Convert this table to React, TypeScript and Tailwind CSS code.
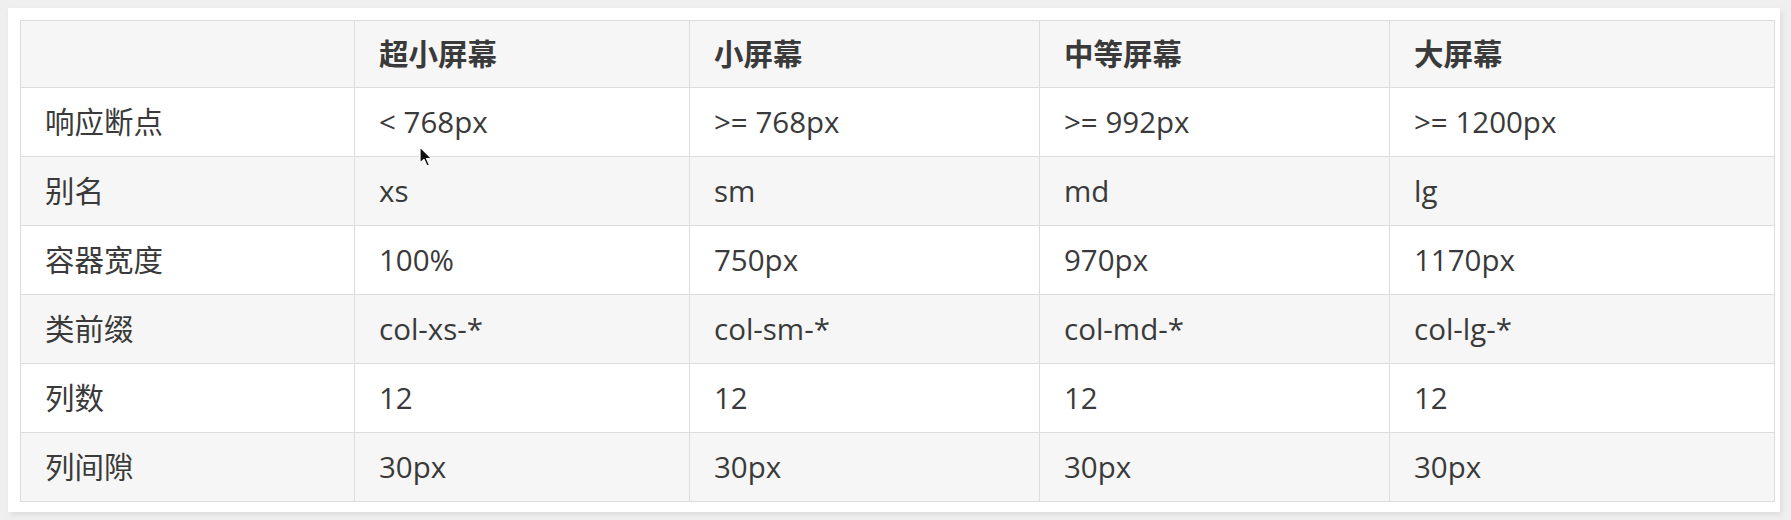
const HEAD = ['', '超小屏幕', '小屏幕', '中等屏幕', '大屏幕'];

const ROWS = [
    ['响应断点', '< 768px', '>= 768px', '>= 992px', '>= 1200px'],
    ['别名', 'xs', 'sm', 'md', 'lg'],
    ['容器宽度', '100%', '750px', '970px', '1170px'],
    ['类前缀', 'col-xs-*', 'col-sm-*', 'col-md-*', 'col-lg-*'],
    ['列数', '12', '12', '12', '12'],
    ['列间隙', '30px', '30px', '30px', '30px'],
];

const COL_WIDTHS = ['w-[334px]', 'w-[335px]', 'w-[350px]', 'w-[350px]', 'w-[385px]'];

// mouse pointer left over the first data row
const Cursor = () => (
    <svg className="absolute left-[411px] top-[138px]" width="14" height="22" viewBox="0 0 14 22">
        <path d="M1 1 L1 17 L5 13.5 L8 20 L10.5 19 L7.5 12.5 L12.5 12.5 Z" fill="#111" stroke="#fff" strokeWidth="1.2" strokeLinejoin="round" />
    </svg>
);

export default function App() {
    return (
        <div className="w-[1791px] h-[520px] bg-[#efefef] p-[8px] pr-[11px]">
            <div
                className="relative h-[504px] bg-white p-[12px] shadow-[2px_3px_6px_rgba(0,0,0,0.08)]"
                style={{ fontFamily: '"Open Sans", "Noto Sans CJK SC", sans-serif' }}
            >
                <table className="w-[1754px] border-collapse border border-[#dcdcdc] text-[29.5px] text-[#3a3a3a] table-fixed">
                    <thead>
                        <tr className="h-[67px] bg-[#f6f6f6]">
                            {HEAD.map((h, i) => (
                                <th
                                    key={i}
                                    className={`${COL_WIDTHS[i]} border border-[#dcdcdc] px-[24px] text-left align-middle font-bold`}
                                >
                                    {h}
                                </th>
                            ))}
                        </tr>
                    </thead>
                    <tbody>
                        {ROWS.map((row, r) => (
                            <tr key={r} className={r % 2 === 0 ? 'h-[69px] bg-white' : 'h-[69px] bg-[#f6f6f6]'}>
                                {row.map((cell, c) => (
                                    <td key={c} className="border border-[#dcdcdc] px-[24px] align-middle">
                                        {cell}
                                    </td>
                                ))}
                            </tr>
                        ))}
                    </tbody>
                </table>
                <Cursor />
            </div>
        </div>
    );
}
